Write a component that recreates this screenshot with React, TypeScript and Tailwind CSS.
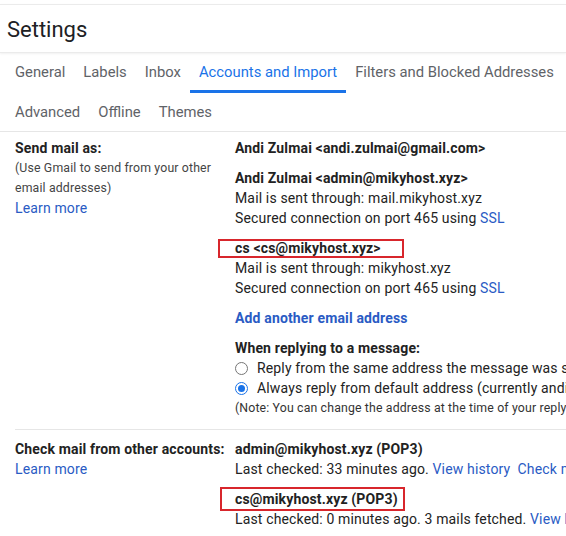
import React from "react";

const tabsTop = ["General", "Labels", "Inbox", "Accounts and Import", "Filters and Blocked Addresses"];
const tabsBottom = ["Advanced", "Offline", "Themes"];

const Radio = ({ checked }: { checked?: boolean }) =>
  checked ? (
    <span className="w-[13px] h-[13px] rounded-full border border-[#1a73e8] flex items-center justify-center shrink-0">
      <span className="w-[7px] h-[7px] rounded-full bg-[#1a73e8]" />
    </span>
  ) : (
    <span className="w-[13px] h-[13px] rounded-full border border-[#767676] shrink-0" />
  );

const Link = ({ children, bold }: { children: React.ReactNode; bold?: boolean }) => (
  <span className={`text-[#2a5bc4] ${bold ? "font-bold" : ""}`}>{children}</span>
);

const App = () => {
  return (
    <div className="w-[566px] h-[536px] overflow-hidden bg-white text-[#222] font-['Roboto',sans-serif] text-[14px] leading-[20px] whitespace-nowrap">
      <div className="h-[4px]" />
      {/* header */}
      <div className="border-t border-[#ebebeb] border-b h-[49px] pl-[7px] pt-[3px] flex items-center shadow-[0_1px_2px_rgba(0,0,0,0.06)]">
        <h1 className="text-[22px] text-[#202124]">Settings</h1>
      </div>

      {/* tabs */}
      <div className="border-b border-[#e6e6e6] pl-[6px] text-[14.8px]">
        <div className="flex h-[40px] pt-[1px]">
          {tabsTop.map((t) => (
            <div
              key={t}
              className={`px-[9px] flex items-center border-b-[3px] ${
                t === "Accounts and Import" ? "border-[#1a73e8] text-[#1a73e8]" : "border-transparent text-[#5f6368]"
              }`}
            >
              {t}
            </div>
          ))}
        </div>
        <div className="flex h-[38px]">
          {tabsBottom.map((t) => (
            <div key={t} className="px-[9px] flex items-center text-[#5f6368]">
              {t}
            </div>
          ))}
        </div>
      </div>

      <div className="pl-[15px] tracking-[0.15px]">
        {/* send mail as */}
        <div className="flex border-b border-[#e6e6e6] pt-[6px] pb-[11px]">
          <div className="w-[220px] shrink-0 whitespace-normal">
            <div className="font-bold">Send mail as:</div>
            <div className="text-[12.3px] leading-[20px] text-[#444] pr-[6px]">
              (Use Gmail to send from your other email addresses)
            </div>
            <Link>Learn more</Link>
          </div>
          <div>
            <div className="font-bold">Andi Zulmai &lt;andi.zulmai@gmail.com&gt;</div>

            <div className="mt-[10px]">
              <div className="font-bold">Andi Zulmai &lt;admin@mikyhost.xyz&gt;</div>
              <div>Mail is sent through: mail.mikyhost.xyz</div>
              <div>
                Secured connection on port 465 using <Link>SSL</Link>
              </div>
            </div>

            <div className="mt-[10px]">
              <div className="relative font-bold">
                cs &lt;cs@mikyhost.xyz&gt;
                <span className="absolute left-[-17px] top-[1px] w-[186px] h-[19px] border-2 border-[#d8262c]" />
              </div>
              <div>Mail is sent through: mikyhost.xyz</div>
              <div>
                Secured connection on port 465 using <Link>SSL</Link>
              </div>
            </div>

            <div className="mt-[10px]">
              <Link bold>Add another email address</Link>
            </div>

            <div className="mt-[10px]">
              <div className="font-bold">When replying to a message:</div>
              <div className="flex items-center gap-[9px]">
                <Radio />
                <span>Reply from the same address the message was sent to</span>
              </div>
              <div className="flex items-center gap-[9px]">
                <Radio checked />
                <span>Always reply from default address (currently andi.zulmai@gmail.com)</span>
              </div>
              <div className="text-[12.3px] text-[#333]">
                (Note: You can change the address at the time of your reply. <Link>Learn more</Link>)
              </div>
            </div>
          </div>
        </div>

        {/* check mail */}
        <div className="flex pt-[9px]">
          <div className="w-[220px] shrink-0">
            <div className="font-bold">Check mail from other accounts:</div>
            <Link>Learn more</Link>
          </div>
          <div>
            <div className="font-bold">admin@mikyhost.xyz (POP3)</div>
            <div>
              Last checked: 33 minutes ago. <Link>View history</Link>&nbsp;&nbsp;<Link>Check mail now</Link>
            </div>
            <div className="mt-[10px]">
              <div className="relative font-bold">
                cs@mikyhost.xyz (POP3)
                <span className="absolute left-[-15px] top-[-2px] w-[185px] h-[24px] border-2 border-[#d8262c]" />
              </div>
              <div>
                Last checked: 0 minutes ago. 3 mails fetched. <Link>View history</Link>&nbsp;&nbsp;<Link>Check mail now</Link>
              </div>
            </div>
          </div>
        </div>
      </div>
    </div>
  );
};

export default App;
